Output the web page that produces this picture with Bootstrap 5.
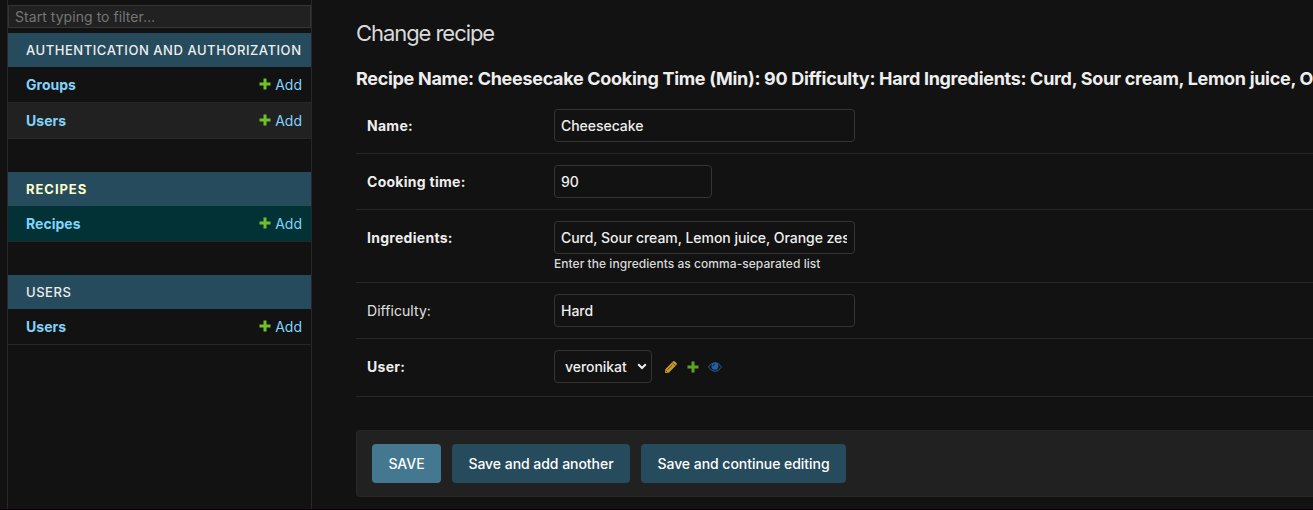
<!DOCTYPE html>
<html lang="en" data-bs-theme="dark">
<head>
<meta charset="utf-8">
<meta name="viewport" content="width=device-width, initial-scale=1">
<title>Change recipe</title>
<link href="https://cdn.jsdelivr.net/npm/bootstrap@5.3.0/dist/css/bootstrap.min.css" rel="stylesheet">
<script src="https://cdn.jsdelivr.net/npm/bootstrap@5.3.0/dist/js/bootstrap.bundle.min.js" defer></script>
<style>
  body { background: #121212; color: #eee; font: 400 14px/18px Inter, "Liberation Sans", sans-serif; height: 510px; border-bottom: 1px solid #080006; }
  a { text-decoration: none; color: #81d4fa; }
  .side-nav { width: 305px; margin-left: 7px; border: solid #272727; border-width: 0 1px; padding-top: 5px; }
  .side-filter { height: 23px; padding: 0 6px; border: 1px solid #353535; border-radius: 0; background: #212121; color: #eee; font-size: 14px; line-height: 21px; letter-spacing: .05px; margin-bottom: 5px; }
  .side-filter::placeholder { color: #757575; opacity: 1; }
  .app-group { margin-bottom: 33px; }
  .app-title { height: 34px; padding: 0 0 0 18px; background: #264b5d; color: #eee; font-size: 13px; font-weight: 500; letter-spacing: .55px; text-transform: uppercase; white-space: nowrap; }
  .app-title.current { color: #ffc; font-weight: 700; letter-spacing: .95px; }
  .model-row { height: 36px; padding: 0 9px 0 18px; border-bottom: 1px solid #272727; }
  .model-row + .model-row { background: #212121; }
  .model-row.current { background: #023236; }
  .model-row > a:first-child { font-weight: 700; letter-spacing: .02px; }
  .model-row svg { margin-bottom: 2px; }
  .page-title { font-size: 22px; line-height: 26px; font-weight: 400; letter-spacing: -1.06px; color: #dadada; margin: 0 0 22px; }
  .object-title { font-size: 18px; line-height: 22px; font-weight: 700; letter-spacing: -.308px; color: #eee; margin: 0 0 8px; white-space: nowrap; overflow: hidden; }
  .main-area { padding: 20px 0 0 44px; min-width: 0; }
  .field-row { padding: 11px 0 11px 11px; border-bottom: 1px solid #272727; }
  .field-row > label { width: 187px; line-height: 33px; flex: none; font-weight: 700; letter-spacing: .28px; color: #eee; }
  .field-row > label.optional { font-weight: 400; letter-spacing: .05px; color: #e0e0e0; }
  .field-row .form-control, .field-row .form-select { width: 301px; height: 33px; padding: 0 7px 0 6px; border: 1px solid #353535; border-radius: 4px; background-color: #121212; color: #eee; font-size: 14px; font-weight: 500; letter-spacing: -.04px; line-height: 31px; }
  .field-row .num { width: 158px; }
  .field-row .form-select { width: 98px; padding: 0 0 0 10px; background: #121212 url("data:image/svg+xml,%3Csvg xmlns='http://www.w3.org/2000/svg' viewBox='0 0 10 7'%3E%3Cpath d='M1.2 1.2 5 5l3.8-3.8' fill='none' stroke='%23eee' stroke-width='2'/%3E%3C/svg%3E") no-repeat right 4px top 12px / 10px 7px; }
  .field-row.user-row { padding-bottom: 13px; }
  .rel-icons { gap: 9px; margin: 1px 0 0 12px; }
  .help-text { font-size: 12px; font-weight: 500; line-height: 15px; letter-spacing: .05px; color: #d8d8d8; padding-top: 2px; height: 17px; }
  .submit-row { margin-top: 33px; height: 67px; padding: 13px 15px; gap: 11px; background: #212121; border: 1px solid #272727; border-right: 0; border-radius: 4px 0 0 4px; }
  .submit-row .btn { width: 178px; height: 39px; padding: 0 0 1px; border: 0; border-radius: 4px; background: #264b5d; color: #fff; font-size: 14px; font-weight: 500; letter-spacing: -.04px; line-height: 37px; }
  .submit-row .btn.primary-action { background: #447790; width: 69px; }
  .submit-row .btn.continue-action { width: 205px; }
</style>
</head>
<body class="d-flex overflow-hidden">
<svg class="d-none">
  <symbol id="plus" viewBox="0 0 12 12"><path d="M4.500 .5h3v4h4v3h-4v4h-3v-4h-4v-3h4z"/></symbol>
</svg>
<nav class="side-nav flex-shrink-0">
  <input class="form-control side-filter" placeholder="Start typing to filter…">
  <section class="app-group">
    <div class="app-title d-flex align-items-center">Authentication and Authorization</div>
    <div class="model-row d-flex align-items-center justify-content-between"><a href="#">Groups</a><a href="#" class="d-flex align-items-center"><svg class="me-1" width="12" height="12" fill="#70bf2b"><use href="#plus"/></svg>Add</a></div>
    <div class="model-row d-flex align-items-center justify-content-between"><a href="#">Users</a><a href="#" class="d-flex align-items-center"><svg class="me-1" width="12" height="12" fill="#70bf2b"><use href="#plus"/></svg>Add</a></div>
  </section>
  <section class="app-group">
    <div class="app-title current d-flex align-items-center">Recipes</div>
    <div class="model-row current d-flex align-items-center justify-content-between"><a href="#">Recipes</a><a href="#" class="d-flex align-items-center"><svg class="me-1" width="12" height="12" fill="#70bf2b"><use href="#plus"/></svg>Add</a></div>
  </section>
  <section class="app-group">
    <div class="app-title d-flex align-items-center">Users</div>
    <div class="model-row d-flex align-items-center justify-content-between"><a href="#">Users</a><a href="#" class="d-flex align-items-center"><svg class="me-1" width="12" height="12" fill="#70bf2b"><use href="#plus"/></svg>Add</a></div>
  </section>
</nav>
<main class="main-area flex-grow-1">
  <h1 class="page-title">Change recipe</h1>
  <h2 class="object-title">Recipe Name: Cheesecake Cooking Time (Min): 90 Difficulty: Hard Ingredients: Curd, Sour cream, Lemon juice, O</h2>
  <form>
    <div class="field-row d-flex"><label for="name">Name:</label><input id="name" class="form-control" value="Cheesecake"></div>
    <div class="field-row d-flex"><label for="time">Cooking time:</label><input id="time" class="form-control num" value="90"></div>
    <div class="field-row d-flex"><label for="ingr">Ingredients:</label><div><input id="ingr" class="form-control" value="Curd, Sour cream, Lemon juice, Orange zest"><div class="help-text">Enter the ingredients as comma-separated list</div></div></div>
    <div class="field-row d-flex"><label for="diff" class="optional">Difficulty:</label><input id="diff" class="form-control" value="Hard"></div>
    <div class="field-row user-row d-flex align-items-center"><label for="user">User:</label><select id="user" class="form-select"><option>veronikat</option></select>
      <div class="rel-icons d-flex align-items-center">
        <svg width="14" height="14" viewBox="0 0 14 14"><path d="M1 13 1.300 9.200 8.900 1.600Q9.900.6 10.900 1.600L12.400 3.100Q13.400 4.100 12.400 5.100L4.800 12.700z" fill="#c99a2a"/><path d="M8.300 2.600l3.100 3.100M3.600 9.700l4.800-4.800" stroke="#121212" stroke-width=".6"/><path d="M2 11l1 1" stroke="#121212" stroke-width=".8"/></svg>
        <svg width="12" height="12" fill="#5fa225"><use href="#plus"/></svg>
        <svg width="14" height="10" viewBox="0 0 14 10"><path d="M.5 5Q3.200.6 7 .6T13.500 5Q10.800 9.400 7 9.400T.5 5z" fill="none" stroke="#24609f"/><circle cx="7" cy="4.300" r="3.500" fill="#24609f"/><path d="M5 4.200Q5.100 2.400 6.900 2.300" fill="none" stroke="#121212" stroke-width=".8"/></svg>
      </div>
    </div>
    <div class="submit-row d-flex">
      <button type="button" class="btn primary-action">SAVE</button>
      <button type="button" class="btn">Save and add another</button>
      <button type="button" class="btn continue-action">Save and continue editing</button>
    </div>
  </form>
</main>
</body>
</html>
